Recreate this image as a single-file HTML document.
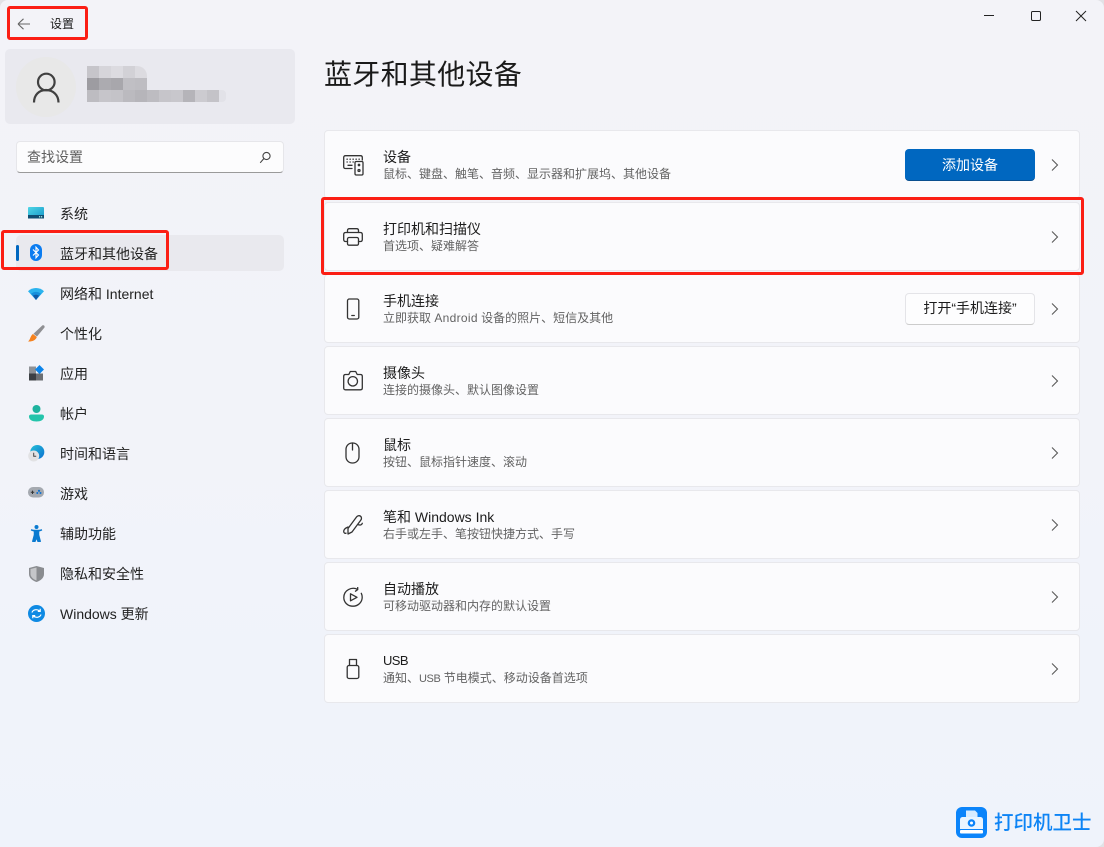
<!DOCTYPE html>
<html lang="zh-CN">
<head>
<meta charset="utf-8">
<title>设置</title>
<style>
html,body{margin:0;padding:0}
body{width:1104px;height:847px;overflow:hidden;position:relative;background:linear-gradient(180deg,#f3f3f8 0%,#f2f3f9 50%,#eff3fb 100%);font-family:"Liberation Sans","Noto Sans CJK SC",sans-serif;color:#1b1b1b}
div,svg{position:absolute}
.t{font-size:14px;line-height:20px;white-space:nowrap}
.n{left:60px;font-size:14px;line-height:20px;white-space:nowrap;color:#222}
.card{left:324px;background:#fbfbfd;border:1px solid #e8e8ec;border-radius:4px;width:754px;height:67px}
.ti{left:383px;font-size:14px;line-height:20px;color:#1c1c1c;white-space:nowrap}
.su{left:383px;font-size:12px;line-height:16px;color:#636363;white-space:nowrap}
.red{border:3px solid #fb1e14;border-radius:3px;box-sizing:border-box}
.ic{fill:none;stroke:#333;stroke-width:1.3;stroke-linecap:round;stroke-linejoin:round}
.ch{left:1050px;fill:none;stroke:#5a5a5a;stroke-width:1.1}
.px{height:12px;width:12px}
</style>
</head>
<body>

<!-- title bar -->
<svg style="left:16px;top:16px" width="16" height="16" viewBox="0 0 16 16" fill="none" stroke="#666" stroke-width="1.1"><path d="M2 8H14M2 8L7.5 2.8M2 8L7.5 13.2"/></svg>
<div class="t" style="left:50px;top:14px;font-size:12px">设置</div>
<div class="red" style="left:7px;top:6px;width:81px;height:34px"></div>

<svg style="left:980px;top:8px" width="110" height="16" viewBox="0 0 110 16" fill="none" stroke="#222" stroke-width="1"><path d="M4 7.5H14"/><rect x="51.500" y="3.500" width="9" height="9" rx="1.200"/><path d="M96 3L106 13M106 3L96 13"/></svg>

<!-- profile -->
<div style="left:5px;top:49px;width:290px;height:75px;background:#e9e9ef;border-radius:5px"></div>
<div style="left:16px;top:57px;width:60px;height:60px;border-radius:50%;background:#e8e8e8"></div>
<svg style="left:32px;top:71px" width="28" height="32" viewBox="0 0 28 32" fill="none" stroke="#404040" stroke-width="2.200"><circle cx="14.300" cy="11" r="8.300"/><path d="M2 31.500C2 24 7 19 14 19C21 19 26.500 24 26.500 31.500"/></svg>

<div class="px" style="left:87px;top:66px;background:#c6c5ca"></div>
<div class="px" style="left:99px;top:66px;background:#d6d5da"></div>
<div class="px" style="left:111px;top:66px;background:#dcdbe0"></div>
<div class="px" style="left:123px;top:66px;background:#d2d1d6"></div>
<div class="px" style="left:135px;top:66px;background:#dcdbe0;border-top-right-radius:10px"></div>
<div class="px" style="left:87px;top:78px;background:#9d9ca1"></div>
<div class="px" style="left:99px;top:78px;background:#acabb0"></div>
<div class="px" style="left:111px;top:78px;background:#a8a7ac"></div>
<div class="px" style="left:123px;top:78px;background:#c0bfc4"></div>
<div class="px" style="left:135px;top:78px;background:#bebdc2"></div>
<div class="px" style="left:87px;top:90px;background:#bdbcc1"></div>
<div class="px" style="left:99px;top:90px;background:#c6c5ca"></div>
<div class="px" style="left:111px;top:90px;background:#c4c3c8"></div>
<div class="px" style="left:123px;top:90px;background:#bbbabf"></div>
<div class="px" style="left:135px;top:90px;background:#b6b5ba"></div>
<div class="px" style="left:147px;top:90px;background:#bdbcc1"></div>
<div class="px" style="left:159px;top:90px;background:#c6c5ca"></div>
<div class="px" style="left:171px;top:90px;background:#c8c7cc"></div>
<div class="px" style="left:183px;top:90px;background:#b5b4b9"></div>
<div class="px" style="left:195px;top:90px;background:#cccbd0"></div>
<div class="px" style="left:207px;top:90px;background:#c4c3c8"></div>
<div class="px" style="left:219px;top:90px;width:7px;background:#e2e2e8;border-radius:0 4px 4px 0"></div>

<!-- search -->
<div style="left:16px;top:141px;width:268px;height:32px;background:#fcfcfd;border:1px solid #e6e6ea;border-bottom:1px solid #9a9a9a;border-radius:4px;box-sizing:border-box"></div>
<div class="t" style="left:27px;top:147px;color:#5f5f5f">查找设置</div>
<svg style="left:258px;top:151px" width="14" height="13" viewBox="0 0 14 13" fill="none" stroke="#444" stroke-width="1.1"><circle cx="8.500" cy="5" r="3.600"/><path d="M5.800 7.600L2.200 11.800"/></svg>

<!-- nav selected -->
<div style="left:16px;top:235px;width:268px;height:36px;background:#e9e9ee;border-radius:5px"></div>
<div style="left:16px;top:245px;width:3px;height:16px;background:#0067c0;border-radius:2px"></div>

<!-- nav icons -->
<svg style="left:28px;top:207px" width="16" height="13" viewBox="0 0 16 13"><defs><linearGradient id="a" x1="0" y1="0" x2="1" y2="1"><stop offset="0" stop-color="#4fd6e6"/><stop offset="1" stop-color="#1596c9"/></linearGradient></defs><rect width="16" height="11.500" rx="1" fill="url(#a)"/><rect y="8" width="16" height="3.500" fill="#0f4d72"/><rect x="11" y="9.200" width="1.200" height="1.200" fill="#bfe"/><rect x="13" y="9.200" width="1.200" height="1.200" fill="#bfe"/></svg>
<svg style="left:30px;top:244px" width="12" height="17" viewBox="0 0 12 17"><rect width="12" height="17" rx="6" fill="#0b7cf0"/><path d="M3 5.500L8.500 11L6 13.800V3.200L8.500 6L3 11.500" fill="none" stroke="#fff" stroke-width="1.100"/></svg>
<svg style="left:28px;top:288px" width="16" height="12" viewBox="0 0 16 12"><path d="M0 3.200C4.500-1 11.500-1 16 3.200L8 12Z" fill="#2bb3ee"/><path d="M3 5.800C6 3.200 10 3.200 13 5.800L8 12Z" fill="#1590dc"/><path d="M5 7.600C7 6.400 9 6.400 11 7.600L8 12Z" fill="#0f5aa8"/></svg>
<svg style="left:28px;top:325px" width="17" height="17" viewBox="0 0 17 17"><path d="M14.500 0.300C16 0 17 1 16.500 2.500L9 11.500L5.500 8.800Z" fill="#8f8f93"/><path d="M5 9L8.800 12C7.800 15.500 3.500 16.800 0 16.500C2.500 14.800 2.300 10.500 5 9Z" fill="#f58220"/></svg>
<svg style="left:29px;top:365px" width="16" height="16" viewBox="0 0 16 16"><rect y="1.500" width="7" height="7" fill="#8e9196"/><rect y="8.500" width="7" height="7" fill="#3c3f44"/><rect x="7" y="8.500" width="7" height="7" fill="#6c6f74"/><path d="M10.500 0L15 4.500L10.500 9L6 4.500Z" fill="#0c84ea"/></svg>
<svg style="left:29px;top:405px" width="15" height="17" viewBox="0 0 15 17"><circle cx="7.500" cy="4" r="4" fill="#1eb39f"/><path d="M0 11.500C0 10 1 9.500 2.500 9.500H12.500C14 9.500 15 10 15 11.500C15 15 11.500 16.500 7.500 16.500C3.500 16.500 0 15 0 11.500Z" fill="#24c4ab"/></svg>
<svg style="left:28px;top:445px" width="17" height="17" viewBox="0 0 17 17"><defs><linearGradient id="g" x1="0" y1="0" x2="1" y2="1"><stop offset="0" stop-color="#27c0d8"/><stop offset="1" stop-color="#0a6fd0"/></linearGradient></defs><circle cx="9.300" cy="7" r="7" fill="url(#g)"/><circle cx="5.700" cy="11" r="5.500" fill="#e2e2e4"/><path d="M5.700 7.800V11.200H8.200" fill="none" stroke="#444" stroke-width="1"/></svg>
<svg style="left:28px;top:487px" width="16" height="11" viewBox="0 0 16 11"><rect width="16" height="10.500" rx="5" fill="#a5a9b0"/><path d="M2.800 5.300H6.200M4.500 3.600V7" stroke="#333" stroke-width="1"/><circle cx="11" cy="3.800" r="1.100" fill="#0d6fd0"/><circle cx="9.300" cy="6" r="1" fill="#0d6fd0"/><circle cx="12.500" cy="6" r="1" fill="#0d6fd0"/></svg>
<svg style="left:30px;top:525px" width="13" height="17" viewBox="0 0 13 17"><circle cx="6.500" cy="2" r="2" fill="#0a7ad0"/><path d="M1 4.800L4.500 6V10L2.800 16.300H5L6.500 12L8 16.300H10.200L8.500 10V6L12 4.800" fill="#0a7ad0" stroke="#0a7ad0" stroke-width="1.500" stroke-linejoin="round"/></svg>
<svg style="left:29px;top:566px" width="15" height="16" viewBox="0 0 15 16"><path d="M7.500 0L15 2V8C15 12 11.500 14.800 7.500 16C3.500 14.800 0 12 0 8V2Z" fill="#8a8c90"/><path d="M7.500 1.500V14.500C4.500 13.500 1.500 11 1.500 8V3Z" fill="#c5c6c9"/></svg>
<svg style="left:28px;top:605px" width="17" height="17" viewBox="0 0 17 17"><circle cx="8.500" cy="8.500" r="8.500" fill="#0f8ae3"/><path d="M4 7.500C4.800 4.800 8.800 3.600 11.600 6M12.200 3.800V6.400H9.800M13 9.500C12.200 12.200 8.200 13.400 5.400 11M4.800 13.200V10.600H7.200" fill="none" stroke="#fff" stroke-width="1.200"/></svg>

<!-- nav text -->
<div class="n" style="top:204px">系统</div>
<div class="n" style="top:244px">蓝牙和其他设备</div>
<div class="n" style="top:284px">网络和 Internet</div>
<div class="n" style="top:324px">个性化</div>
<div class="n" style="top:364px">应用</div>
<div class="n" style="top:404px">帐户</div>
<div class="n" style="top:444px">时间和语言</div>
<div class="n" style="top:484px">游戏</div>
<div class="n" style="top:524px">辅助功能</div>
<div class="n" style="top:564px">隐私和安全性</div>
<div class="n" style="top:604px">Windows 更新</div>

<div class="red" style="left:1px;top:230px;width:168px;height:40px"></div>

<!-- heading -->
<div style="left:324px;top:55px;font-size:28px;line-height:40px;color:#1a1a1a;white-space:nowrap;letter-spacing:.3px">蓝牙和其他设备</div>

<!-- cards -->
<div class="card" style="top:130px"></div>
<div class="card" style="top:202px"></div>
<div class="card" style="top:274px"></div>
<div class="card" style="top:346px"></div>
<div class="card" style="top:418px"></div>
<div class="card" style="top:490px"></div>
<div class="card" style="top:562px"></div>
<div class="card" style="top:634px"></div>

<!-- card icons -->
<svg class="ic" style="left:343px;top:155px" width="21" height="21" viewBox="0 0 21 21"><path d="M9 13.500H2.500C1.300 13.500.7 12.900.7 11.700V2.500C.7 1.300 1.300.7 2.500.7H17.500C18.700.7 19.300 1.300 19.300 2.500V5"/><rect x="12" y="6.500" width="8" height="13.500" rx="1.200"/><circle cx="16" cy="10" r=".7"/><circle cx="16" cy="15.500" r="1"/><path d="M4 4.200H4.300M7 4.200H7.300M10 4.200H10.300M13 4.200H13.300M16 4.200H16.300M4 7H4.300M7 7H7.300M10 7H10.300M5 10.300H9"/></svg>
<svg class="ic" style="left:343px;top:228px" width="20" height="18" viewBox="0 0 20 18"><path d="M4.500 4.500V2.500C4.500 1.300 5.300.7 6.300.7H13.700C14.700.7 15.500 1.300 15.500 2.500V4.500"/><path d="M4.500 13.500H2.500C1.300 13.500.7 12.700.7 11.500V6.500C.7 5.300 1.500 4.500 2.700 4.500H17.300C18.500 4.500 19.300 5.300 19.300 6.500V11.500C19.300 12.700 18.700 13.500 17.500 13.500H15.500"/><rect x="4.500" y="9.500" width="11" height="7.700" rx="1.500"/></svg>
<svg class="ic" style="left:346px;top:298px" width="14" height="22" viewBox="0 0 14 22"><rect x="1.500" y="1" width="11.300" height="20" rx="1.800"/><path d="M5.800 17.500H8.300"/></svg>
<svg class="ic" style="left:343px;top:370px" width="20" height="21" viewBox="0 0 20 21"><path d="M2.500 4.500H5.800L7.300 1.500H12.700L14.200 4.500H17.500C18.700 4.500 19.300 5.200 19.300 6.300V18C19.300 19.200 18.700 19.800 17.500 19.800H2.500C1.300 19.800.7 19.200.7 18V6.300C.7 5.200 1.300 4.500 2.500 4.500Z"/><circle cx="9.800" cy="11.300" r="4.700"/></svg>
<svg class="ic" style="left:345px;top:442px" width="15" height="22" viewBox="0 0 15 22"><rect x="1" y="1" width="13" height="20" rx="6.300"/><path d="M7.500 1V8"/></svg>
<svg class="ic" style="left:343px;top:514px" width="20" height="22" viewBox="0 0 20 22"><path d="M5 14.500L13.500 3C14.500 1.700 16.300 1.300 17.500 2.200C18.700 3.100 18.800 4.800 17.800 6.100L9 18L5 20Z"/><path d="M5 13C2.500 14 .7 15.500 .7 17.500C.7 19 2 19.500 3 19.200"/><path d="M15.500 10.800C17.200 11.300 19 11 19.300 9.300"/></svg>
<svg class="ic" style="left:343px;top:587px" width="20" height="20" viewBox="0 0 20 20"><path d="M14.500 2.300C8.800-.5 .8 3 .8 10.500C.8 15.500 4.800 19.200 10 19.200C15 19.200 19.200 15.300 19.200 10.300C19.200 8.800 18.900 7.500 18.300 6.300"/><path d="M14.700.5V2.600L12.500 4.200"/><path d="M7.500 6.800L14 10.300L7.500 13.800Z"/></svg>
<svg class="ic" style="left:346px;top:658px" width="14" height="22" viewBox="0 0 14 22"><path d="M3.500 7.500V1.500H10.500V7.500"/><rect x="1.200" y="7.500" width="11.600" height="13" rx="1.800"/></svg>

<!-- card text -->
<div class="ti" style="top:147px">设备</div>
<div class="su" style="top:166px">鼠标、键盘、触笔、音频、显示器和扩展坞、其他设备</div>
<div class="ti" style="top:219px">打印机和扫描仪</div>
<div class="su" style="top:238px">首选项、疑难解答</div>
<div class="ti" style="top:291px">手机连接</div>
<div class="su" style="top:310px">立即获取 <span style="letter-spacing:.3px">Android</span> 设备的照片、短信及其他</div>
<div class="ti" style="top:363px">摄像头</div>
<div class="su" style="top:382px">连接的摄像头、默认图像设置</div>
<div class="ti" style="top:435px">鼠标</div>
<div class="su" style="top:454px">按钮、鼠标指针速度、滚动</div>
<div class="ti" style="top:507px">笔和 Windows Ink</div>
<div class="su" style="top:526px">右手或左手、笔按钮快捷方式、手写</div>
<div class="ti" style="top:579px">自动播放</div>
<div class="su" style="top:598px">可移动驱动器和内存的默认设置</div>
<div class="ti" style="top:651px;font-size:13px;letter-spacing:-.6px">USB</div>
<div class="su" style="top:670px">通知、<span style="font-size:11px;letter-spacing:-.4px">USB</span> 节电模式、移动设备首选项</div>

<!-- buttons -->
<div style="left:905px;top:149px;width:130px;height:32px;background:#0067c0;border-bottom:1px solid #0a4f8f;border-radius:4px;box-sizing:border-box;color:#fff;font-size:14px;line-height:32px;text-align:center">添加设备</div>
<div style="left:905px;top:293px;width:130px;height:32px;background:#fdfdfe;border:1px solid #e4e4e8;border-bottom-color:#ccc;border-radius:4px;box-sizing:border-box;color:#1b1b1b;font-size:14px;line-height:29px;text-align:center;white-space:nowrap">打开“手机连接”</div>

<!-- chevrons -->
<svg class="ch" style="top:158px" width="10" height="14" viewBox="0 0 10 14"><path d="M2 1.500L7.500 7L2 12.500"/></svg>
<svg class="ch" style="top:230px" width="10" height="14" viewBox="0 0 10 14"><path d="M2 1.500L7.500 7L2 12.500"/></svg>
<svg class="ch" style="top:302px" width="10" height="14" viewBox="0 0 10 14"><path d="M2 1.500L7.500 7L2 12.500"/></svg>
<svg class="ch" style="top:374px" width="10" height="14" viewBox="0 0 10 14"><path d="M2 1.500L7.500 7L2 12.500"/></svg>
<svg class="ch" style="top:446px" width="10" height="14" viewBox="0 0 10 14"><path d="M2 1.500L7.500 7L2 12.500"/></svg>
<svg class="ch" style="top:518px" width="10" height="14" viewBox="0 0 10 14"><path d="M2 1.500L7.500 7L2 12.500"/></svg>
<svg class="ch" style="top:590px" width="10" height="14" viewBox="0 0 10 14"><path d="M2 1.500L7.500 7L2 12.500"/></svg>
<svg class="ch" style="top:662px" width="10" height="14" viewBox="0 0 10 14"><path d="M2 1.500L7.500 7L2 12.500"/></svg>

<!-- highlight -->
<div class="red" style="left:321px;top:197px;width:763px;height:78px"></div>

<!-- watermark -->
<svg style="left:956px;top:807px" width="31" height="31" viewBox="0 0 31 31"><rect width="31" height="31" rx="6" fill="#0b84fa"/><path d="M10 3.500H19L21.500 6V12H10Z" fill="#d8ecff"/><path d="M4 13C4 11 5 10 7 10H24C26 10 27 11 27 13V22H4Z" fill="#eaf5ff"/><circle cx="15.500" cy="16" r="3.800" fill="#0b84fa"/><circle cx="15.500" cy="16" r="1.500" fill="#fff"/><rect x="4" y="23" width="23" height="3.500" rx="1" fill="#fff"/></svg>
<div style="left:994px;top:809px;font-size:19.500px;line-height:28px;font-weight:500;color:#0d84f5;white-space:nowrap">打印机卫士</div>

<!-- window corners -->
<div style="left:0;top:0;width:1104px;height:847px;border-radius:8px 8px 8px 0;box-shadow:0 0 0 8px #e2e2e6"></div>

</body>
</html>
